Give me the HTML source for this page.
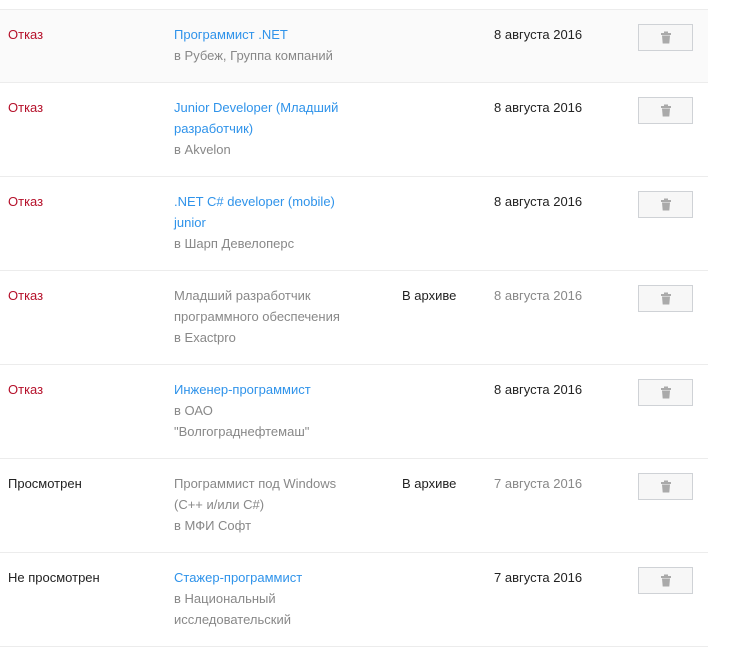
<!DOCTYPE html><html><head><meta charset="utf-8"><style>
body{margin:0;background:#fff;font-family:"Liberation Sans",Arial,sans-serif;font-size:13px;color:#222;width:733px;height:617px;overflow:hidden}
.t{position:absolute;left:0;top:9px;width:708px;border-top:1px solid #ececec}
.r{position:relative;border-bottom:1px solid #ececec;padding:14px 0 0;line-height:21px;box-sizing:border-box;overflow:hidden}
.r.a{background:#fafafa}
.c{position:absolute;top:14px}
.s{left:8px}.v{position:relative;margin-left:174px;width:186px}.ar{left:402px}.d{left:494px}
.red{color:#b5102a}.blue{color:#2f93ea}.g{color:#888}
.b{position:absolute;left:638px;top:14px;width:55px;height:27px;border:1px solid #cfd2d6;background:#f7f7f7;box-sizing:border-box}
.b svg{position:absolute;left:21px;top:6px}
</style></head><body><div class="t">
<div class="r a" style="height:73px"><div class="c s red">Отказ</div><div class="v"><span class="blue">Программист .NET</span><br><span class="g">в Рубеж, Группа компаний</span></div><div class="c d">8 августа 2016</div><div class="b"><svg width="12" height="13" viewBox="0 0 12 13"><rect x="1" y="2" width="10" height="2" fill="#aaa"/><rect x="4" y="0.5" width="4" height="2" fill="#aaa"/><path d="M2 4.5h8l-0.7 8h-6.6z" fill="#aaa"/></svg></div></div>
<div class="r" style="height:94px"><div class="c s red">Отказ</div><div class="v"><span class="blue">Junior Developer (Младший разработчик)</span><br><span class="g">в Akvelon</span></div><div class="c d">8 августа 2016</div><div class="b"><svg width="12" height="13" viewBox="0 0 12 13"><rect x="1" y="2" width="10" height="2" fill="#aaa"/><rect x="4" y="0.5" width="4" height="2" fill="#aaa"/><path d="M2 4.5h8l-0.7 8h-6.6z" fill="#aaa"/></svg></div></div>
<div class="r" style="height:94px"><div class="c s red">Отказ</div><div class="v"><span class="blue">.NET C# developer (mobile)<br>junior</span><br><span class="g">в Шарп Девелоперс</span></div><div class="c d">8 августа 2016</div><div class="b"><svg width="12" height="13" viewBox="0 0 12 13"><rect x="1" y="2" width="10" height="2" fill="#aaa"/><rect x="4" y="0.5" width="4" height="2" fill="#aaa"/><path d="M2 4.5h8l-0.7 8h-6.6z" fill="#aaa"/></svg></div></div>
<div class="r" style="height:94px"><div class="c s red">Отказ</div><div class="v g">Младший разработчик программного обеспечения<br>в Exactpro</div><div class="c ar">В архиве</div><div class="c d g">8 августа 2016</div><div class="b"><svg width="12" height="13" viewBox="0 0 12 13"><rect x="1" y="2" width="10" height="2" fill="#aaa"/><rect x="4" y="0.5" width="4" height="2" fill="#aaa"/><path d="M2 4.5h8l-0.7 8h-6.6z" fill="#aaa"/></svg></div></div>
<div class="r" style="height:94px"><div class="c s red">Отказ</div><div class="v" style="width:160px"><span class="blue">Инженер-программист</span><br><span class="g">в ОАО<br>"Волгограднефтемаш"</span></div><div class="c d">8 августа 2016</div><div class="b"><svg width="12" height="13" viewBox="0 0 12 13"><rect x="1" y="2" width="10" height="2" fill="#aaa"/><rect x="4" y="0.5" width="4" height="2" fill="#aaa"/><path d="M2 4.5h8l-0.7 8h-6.6z" fill="#aaa"/></svg></div></div>
<div class="r" style="height:94px"><div class="c s">Просмотрен</div><div class="v g">Программист под Windows<br>(C++ и/или C#)<br>в МФИ Софт</div><div class="c ar">В архиве</div><div class="c d g">7 августа 2016</div><div class="b"><svg width="12" height="13" viewBox="0 0 12 13"><rect x="1" y="2" width="10" height="2" fill="#aaa"/><rect x="4" y="0.5" width="4" height="2" fill="#aaa"/><path d="M2 4.5h8l-0.7 8h-6.6z" fill="#aaa"/></svg></div></div>
<div class="r" style="height:94px"><div class="c s">Не просмотрен</div><div class="v" style="width:150px"><span class="blue">Стажер-программист</span><br><span class="g">в Национальный исследовательский</span></div><div class="c d">7 августа 2016</div><div class="b"><svg width="12" height="13" viewBox="0 0 12 13"><rect x="1" y="2" width="10" height="2" fill="#aaa"/><rect x="4" y="0.5" width="4" height="2" fill="#aaa"/><path d="M2 4.5h8l-0.7 8h-6.6z" fill="#aaa"/></svg></div></div>
</div></body></html>
